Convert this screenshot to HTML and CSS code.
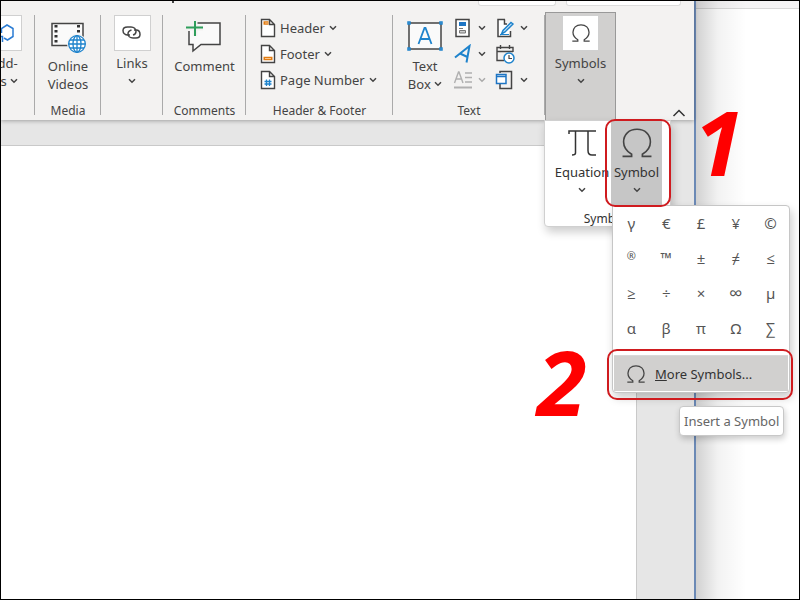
FILE: index.html
```html
<!DOCTYPE html>
<html lang="en">
  <head>
    <meta charset="UTF-8" />
    <meta name="viewport" content="width=device-width, initial-scale=1.0" />
    <title>Insert a Symbol</title>
    <link rel="stylesheet" href="styles.css">
  </head>
  <body>
    <svg class="defs" aria-hidden="true">
      <symbol id="chevron" viewBox="0 0 8 6"><path d="M1 1.2 4 4.2 7 1.2" /></symbol>
      <symbol id="omega" viewBox="0 0 28 28"><path d="M0.500 26.500H9V24.500C4 21.500 1.500 18 1.500 13 1.500 6 6.500 1.200 14 1.200S26.500 6 26.500 13C26.500 18 24 21.500 19 24.500V26.500H27.500" /></symbol>
    </svg>

    <div class="frame">
      <main class="app">
        <header class="ribbon">
          <div class="tab-strip">
            <span class="tab-mark"></span>
            <span class="tab-box share"></span>
            <span class="tab-box comments"></span>
          </div>

          <div class="groups">
            <section class="group addins">
              <button class="tool">
                <span class="tile">
                  <svg width="36" height="34" viewBox="0 0 36 34" fill="none" stroke="#2b7cd3" stroke-width="1.5">
                    <path d="M15.500 17V12.500L21 9 27 12.500V20.500L21.500 24 18 22M12 20.500H16.500V26" />
                  </svg>
                </span>
                <span>Add-<br>ins <svg class="chevron"><use href="#chevron" /></svg></span>
              </button>
            </section>

            <section class="group media">
              <button class="tool">
                <svg class="icon" width="36" height="34" viewBox="0 0 36 34" fill="none">
                  <rect x="2" y="2.500" width="31" height="22" fill="#fafafa" stroke="#444" stroke-width="1.500" />
                  <path d="M6 4V24M28.500 4V12" stroke="#333" stroke-width="3" stroke-dasharray="2.500 2.500" />
                  <circle cx="27" cy="23" r="10" fill="#f3f2f1" />
                  <g stroke="#1e83cc" stroke-width="1.300">
                    <circle cx="27" cy="23" r="8.300" fill="#fff" />
                    <ellipse cx="27" cy="23" rx="4" ry="8.300" />
                    <path d="M27 14.500V31.500M18.500 23H35.500M20 19H34M20 27H34" />
                  </g>
                </svg>
                <span>Online<br>Videos</span>
              </button>
              <h2 class="group-name">Media</h2>
            </section>

            <section class="group links">
              <button class="tool">
                <span class="tile">
                  <svg width="36" height="34" viewBox="0 0 36 34" fill="none" stroke="#444" stroke-width="1.500">
                    <path d="M16 19H14C11 19 9 17 9 14.500S11 11 13.500 11H17C20 11 22 13 22 15.500 22 17.500 21 18.500 19 19" />
                    <path d="M20 14H22C24.500 14 26 16 26 18.500S24.500 22 22 22H19C16 22 14 20 14 18 14 16 15.500 14.500 17.500 14" />
                  </svg>
                </span>
                <span>Links</span>
                <svg class="chevron"><use href="#chevron" /></svg>
              </button>
            </section>

            <section class="group notes">
              <button class="tool">
                <svg class="icon" width="36" height="34" viewBox="0 3 36 34" fill="none">
                  <path d="M11 5H34V26.500H15L7 33V26.500H3V13" fill="#fafafa" stroke="#444" stroke-width="1.500" />
                  <path d="M9 4V18M1 10H17" stroke="#f3f2f1" stroke-width="5" />
                  <path d="M9 1V18M0 9.500H17" stroke="#2e9e5b" stroke-width="2" />
                </svg>
                <span>Comment</span>
              </button>
              <h2 class="group-name">Comments</h2>
            </section>

            <section class="group pages">
              <div class="rows">
                <button class="row">
                  <svg width="16" height="20" viewBox="0 0 16 20" fill="none">
                    <path d="M1.500 1.500H9.500L14.500 6.500V18.500H1.500ZM9.500 1.500V6.500H14.500" fill="#fff" stroke="#444" stroke-width="1.400" />
                    <path d="M3.500 5H8.500" stroke="#e07b12" stroke-width="3.500" />
                    <path d="M5 5H8" stroke="#fbc58b" />
                  </svg>
                  Header <svg class="chevron"><use href="#chevron" /></svg>
                </button>
                <button class="row">
                  <svg width="16" height="20" viewBox="0 0 16 20" fill="none">
                    <path d="M1.500 1.500H9.500L14.500 6.500V18.500H1.500ZM9.500 1.500V6.500H14.500" fill="#fff" stroke="#444" stroke-width="1.400" />
                    <path d="M3.500 14.500H12.500" stroke="#e07b12" stroke-width="3.500" />
                    <path d="M5 14.500H11" stroke="#fbc58b" />
                  </svg>
                  Footer <svg class="chevron"><use href="#chevron" /></svg>
                </button>
                <button class="row">
                  <svg width="16" height="20" viewBox="0 0 16 20" fill="none">
                    <path d="M1.500 1.500H9.500L14.500 6.500V18.500H1.500ZM9.500 1.500V6.500H14.500" fill="#fff" stroke="#444" stroke-width="1.400" />
                    <path d="M6.500 9.500V16M9.500 9.500V16M4.500 11.500H11.500M4.500 14H11.500" stroke="#1e83cc" stroke-width="1.300" />
                  </svg>
                  Page Number <svg class="chevron"><use href="#chevron" /></svg>
                </button>
              </div>
              <h2 class="group-name">Header &amp; Footer</h2>
            </section>

            <section class="group text">
              <div class="text-tools">
                <button class="tool">
                  <svg class="icon" width="36" height="34" viewBox="0 0 36 34" fill="none">
                    <rect x="2" y="2" width="32" height="26" fill="#fafafa" stroke="#444" stroke-width="1.500" />
                    <path d="M11.500 23 17.500 7H18.500L24.500 23M13.500 18H22.500" stroke="#1e83cc" stroke-width="1.800" />
                    <path d="M1 1H3V3H1ZM33 1H35V3H33ZM1 27H3V29H1ZM33 27H35V29H33Z" fill="#fff" stroke="#1e83cc" stroke-width="1.500" />
                  </svg>
                  <span>Text<br>Box <svg class="chevron"><use href="#chevron" /></svg></span>
                </button>
                <div class="small-tools">
                  <button class="small" aria-label="Quick Parts">
                    <svg width="20" height="20" viewBox="0 0 20 20" fill="none">
                      <rect x="3" y="1.500" width="13" height="17" fill="#fff" stroke="#444" stroke-width="1.500" />
                      <path d="M6 6H13" stroke="#1e75c4" stroke-width="4" />
                      <path d="M6 10.500H10" stroke="#777" />
                      <path d="M6.500 12.500H12.500V15H6.500Z" fill="#ccc" stroke="#777" />
                    </svg>
                    <svg class="chevron"><use href="#chevron" /></svg>
                  </button>
                  <button class="small" aria-label="Signature Line">
                    <svg width="20" height="20" viewBox="0 0 20 20" fill="none">
                      <path d="M10 1.500H3V18.500H15.500V13M9.500 1.500V6H12" fill="#fff" stroke="#444" stroke-width="1.500" />
                      <path d="M18 6 10 14 6.500 16 8 12.500 16 4.500Z" fill="#cfe6f7" stroke="#1e83cc" stroke-width="1.500" />
                      <path d="M5 16.500H14" stroke="#1e83cc" />
                    </svg>
                    <svg class="chevron"><use href="#chevron" /></svg>
                  </button>
                  <button class="small" aria-label="WordArt">
                    <svg width="20" height="20" viewBox="0 0 20 20" fill="none" stroke="#1e83cc" stroke-width="2">
                      <path d="M2 13.500 16.500 2 13.500 18.500M7 9.500 14.500 13" />
                    </svg>
                    <svg class="chevron"><use href="#chevron" /></svg>
                  </button>
                  <button class="small" aria-label="Date and Time">
                    <svg width="20" height="20" viewBox="0 0 20 20" fill="none">
                      <path d="M9 16.500H2V3.500H18V8M2 7.500H18M5.500 1V5M14.500 1V5" stroke="#444" stroke-width="1.400" />
                      <circle cx="14" cy="14" r="5" fill="#fff" stroke="#1e83cc" stroke-width="1.500" />
                      <path d="M14 11V14.500H17" stroke="#444" stroke-width="1.200" />
                    </svg>
                  </button>
                  <button class="small" aria-label="Drop Cap" disabled>
                    <svg width="20" height="20" viewBox="0 0 20 20" fill="none" stroke="#b0b0b0" stroke-width="1.400">
                      <path d="M1.500 13 5.500 2H6L10 13M3 9H8.500M12 3H19M12 7.500H19M12 12H19" />
                      <path d="M1 17.500H19" stroke-width="2" />
                    </svg>
                    <svg class="chevron"><use href="#chevron" /></svg>
                  </button>
                  <button class="small" aria-label="Object">
                    <svg width="20" height="20" viewBox="0 0 20 20" fill="none">
                      <path d="M5 3V1.500H16.500V18.500H5V14" stroke="#444" stroke-width="1.500" />
                      <path d="M1.500 4.500H11V13.500H1.500ZM1.500 6.500H11" fill="#fff" stroke="#1e75c4" stroke-width="1.500" />
                    </svg>
                    <svg class="chevron"><use href="#chevron" /></svg>
                  </button>
                </div>
              </div>
              <h2 class="group-name">Text</h2>
            </section>

            <div class="symbols">
              <button class="tool symbols-btn" aria-expanded="true">
                <span class="tile"><svg class="omega" width="18" height="18"><use href="#omega" /></svg></span>
                <span>Symbols</span>
                <svg class="chevron"><use href="#chevron" /></svg>
              </button>

              <div class="flyout">
                <div class="flyout-tools">
                  <button class="flyout-btn">
                    <svg width="30" height="30" viewBox="0 0 30 30" fill="none" stroke="#333" stroke-width="1.500">
                      <path d="M2 6V3H29M8.500 3V25C8.500 26.500 7 27 5 27M21 3V22.500C21 26 22.500 27 25 27H29" />
                    </svg>
                    <span>Equation</span>
                    <svg class="chevron"><use href="#chevron" /></svg>
                  </button>
                  <button class="flyout-btn active" aria-expanded="true">
                    <svg class="omega" width="30" height="30"><use href="#omega" /></svg>
                    <span>Symbol</span>
                    <svg class="chevron"><use href="#chevron" /></svg>
                  </button>
                </div>
                <h2 class="group-name">Symbols</h2>

                <div class="symbol-menu">
                  <div class="symbol-grid">
                    <button>γ</button>
                    <button>€</button>
                    <button>£</button>
                    <button>¥</button>
                    <button>©</button>
                    <button class="sup">®</button>
                    <button>™</button>
                    <button>±</button>
                    <button>≠</button>
                    <button>≤</button>
                    <button>≥</button>
                    <button>÷</button>
                    <button>×</button>
                    <button class="wide">∞</button>
                    <button>µ</button>
                    <button>α</button>
                    <button>β</button>
                    <button>π</button>
                    <button>Ω</button>
                    <button>∑</button>
                  </div>
                  <button class="more">
                    <svg class="omega" width="18" height="18"><use href="#omega" /></svg>
                    <span><u>M</u>ore Symbols...</span>
                  </button>
                  <div class="tooltip" role="tooltip">Insert a Symbol</div>
                  <span class="ring ring-more"></span>
                  <span class="step step-two">2</span>
                </div>

                <span class="ring ring-symbol"></span>
                <span class="step step-one">1</span>
              </div>
            </div>

            <button class="collapse" aria-label="Collapse the Ribbon">
              <svg width="14" height="8" viewBox="0 0 14 8" fill="none" stroke="#333" stroke-width="1.500"><path d="M1.500 7 7 1.500 12.500 7" /></svg>
            </button>
          </div>
        </header>

        <div class="workspace">
          <div class="page"></div>
        </div>
      </main>

      <aside class="behind"></aside>
    </div>
  </body>
</html>
```

FILE: styles.css
```css
* {
  margin: 0;
  padding: 0;
  box-sizing: border-box;
}

body {
  font-family: "Noto Sans", "Open Sans", sans-serif;
  font-size: 13px;
  line-height: 18px;
  color: #444;
  background: #fff;
}

button {
  font: inherit;
  color: inherit;
  background: none;
  border: none;
}

svg {
  display: block;
  flex: none;
}

.defs {
  position: absolute;
  width: 0;
  height: 0;
}

.frame {
  display: flex;
  height: 100vh;
  border: 1px solid #000;
  overflow: hidden;
}

.app {
  position: relative;
  z-index: 1;
  flex: 1;
  display: flex;
  flex-direction: column;
  min-width: 0;
  border-right: 2px solid #6b89b5;
}

/* ribbon */

.ribbon {
  position: relative;
  z-index: 1;
  background: #f3f2f1;
  box-shadow: 0 1px 4px rgba(0, 0, 0, 0.3);
}

.tab-strip {
  display: flex;
  justify-content: flex-end;
  gap: 10px;
  height: 5px;
  padding-right: 13px;
}

.tab-mark {
  width: 2px;
  height: 2px;
  margin-right: auto;
  margin-left: 171px;
  background: #444;
}

.tab-box {
  background: #fff;
  border: 1px solid #dcdcdc;
  border-top: none;
  border-radius: 0 0 3px 3px;
}

.share {
  width: 78px;
}

.comments {
  width: 115px;
}

.groups {
  display: flex;
  height: 114px;
  padding-top: 9px;
}

.group {
  position: relative;
  display: flex;
  flex: none;
  flex-direction: column;
  align-items: center;
  height: 105px;
}

/* the divider stops short of the group name */
.group::after {
  content: "";
  position: absolute;
  top: 0;
  right: 0;
  width: 1px;
  height: 100px;
  background: #aaa;
}

.group-name {
  margin-top: auto;
  padding-bottom: 2px;
  font-size: 12px;
  font-weight: 400;
  line-height: 14px;
  white-space: nowrap;
}

.tool {
  display: flex;
  flex-direction: column;
  align-items: center;
}

.tile {
  display: flex;
  align-items: center;
  justify-content: center;
  width: 37px;
  height: 36px;
  margin-bottom: 3px;
  background: #fff;
  border: 1px solid #d0d0d0;
}

.icon {
  margin: 6px 0 2px;
}

.chevron {
  display: inline-block;
  width: 8px;
  height: 6px;
  vertical-align: 2px;
  fill: none;
  stroke: #444;
  stroke-width: 1.5;
}

.tool > .chevron {
  margin-top: 6px;
}

.omega {
  fill: none;
  stroke: #444;
  stroke-width: 1.5;
}

.tile .omega,
.more .omega {
  stroke-width: 2;
}

.addins {
  align-items: flex-end;
  width: 34px;
  padding-right: 13px;
  overflow: hidden;
}

.media {
  width: 66px;
}

.links {
  width: 62px;
}

.notes {
  width: 83px;
}

.pages {
  width: 147px;
}

.text {
  width: 152px;
}

.rows {
  display: flex;
  flex-direction: column;
  align-self: stretch;
  padding-left: 14px;
}

.row {
  display: flex;
  align-items: center;
  gap: 4px;
  height: 26px;
  white-space: nowrap;
}

.text-tools {
  display: flex;
  align-self: stretch;
  gap: 10px;
  padding-left: 14px;
}

.small-tools {
  display: grid;
  grid-template-columns: 42px 36px;
  grid-auto-rows: 26px;
}

.small {
  display: flex;
  align-items: center;
  gap: 5px;
}

.small:disabled .chevron {
  stroke: #aaa;
}

/* symbols button and what it opens */

.symbols {
  position: relative;
  flex: none;
  width: 71px;
  margin-top: -3px;
}

.symbols-btn {
  width: 100%;
  height: 108px;
  padding-top: 2px;
  background: #d1d0cf;
  border: 1px solid #999;
  border-bottom: none;
}

.flyout {
  position: absolute;
  top: 108px;
  left: -1px;
  display: flex;
  flex-direction: column;
  align-items: center;
  width: 127px;
  height: 107px;
  color: #333;
  background: #fff;
  border: 1px solid #d0d0d0;
  border-radius: 0 0 4px 4px;
  box-shadow: 2px 5px 10px rgba(0, 0, 0, 0.2);
}

.flyout .group-name {
  padding-bottom: 0;
}

.flyout-tools {
  display: flex;
  align-self: stretch;
  justify-content: flex-end;
  padding-right: 8px;
}

.flyout-btn {
  display: flex;
  flex-direction: column;
  align-items: center;
  width: 58px;
  height: 85px;
  padding-top: 7px;
}

.flyout-btn span {
  margin: 5px 0 6px;
}

.flyout-btn.active {
  width: 51px;
  background: #c6c6c6;
}

.symbol-menu {
  position: absolute;
  top: 84px;
  left: 67px;
  width: 178px;
  padding: 1px;
  background: #fff;
  border: 1px solid #c6c6c6;
  border-radius: 0 4px 4px 4px;
  box-shadow: 2px 5px 10px rgba(0, 0, 0, 0.2);
}

.symbol-grid {
  display: grid;
  grid-template-columns: repeat(5, 1fr);
  grid-auto-rows: 35px;
  height: 149px;
  border-bottom: 1px solid #d8d8d8;
}

.symbol-grid button {
  padding-bottom: 4px;
  font-size: 15px;
  color: #555;
}

.symbol-grid .sup {
  padding-bottom: 8px;
  font-size: 11px;
}

.symbol-grid .wide {
  font-size: 19px;
}

.more {
  display: flex;
  align-items: center;
  gap: 10px;
  width: 100%;
  height: 35px;
  padding-left: 13px;
  background: #d1d0cf;
}

.tooltip {
  position: absolute;
  top: 200px;
  left: 66px;
  padding: 5px 4px;
  color: #666;
  white-space: nowrap;
  background: #fff;
  border: 1px solid #c8c8c8;
  border-radius: 4px;
  box-shadow: 1px 3px 6px rgba(0, 0, 0, 0.2);
}

/* step marks */

.ring {
  position: absolute;
  border: 2px solid #cf1b1f;
  border-radius: 10px;
  pointer-events: none;
}

.ring-symbol {
  top: -2px;
  left: 60px;
  width: 66px;
  height: 88px;
}

.ring-more {
  top: 143px;
  left: -6px;
  width: 186px;
  height: 51px;
}

.step {
  position: absolute;
  font-family: "Open Sans", "Noto Sans", sans-serif;
  font-size: 90px;
  font-style: italic;
  font-weight: 700;
  line-height: 90px;
  color: #f00;
}

.step-one {
  top: -25px;
  left: 149px;
}

.step-two {
  top: 130px;
  left: -76px;
}

.collapse {
  align-self: flex-end;
  margin-left: auto;
  padding: 3px 8px;
}

/* document */

.workspace {
  flex: 1;
  padding: 25px 57px 0 0;
  background: #e6e6e6;
}

.page {
  height: 100%;
  background: #fff;
  border: 1px solid #c9c9c9;
  border-width: 1px 1px 0 0;
}

.behind {
  width: 103px;
  background: linear-gradient(90deg, rgba(0, 0, 0, 0.18), rgba(0, 0, 0, 0.05) 22px, transparent 50px),
    linear-gradient(#f5f4f5 7px, #d8d8d8 7px, #d8d8d8 8px, #fff 8px);
}
```
